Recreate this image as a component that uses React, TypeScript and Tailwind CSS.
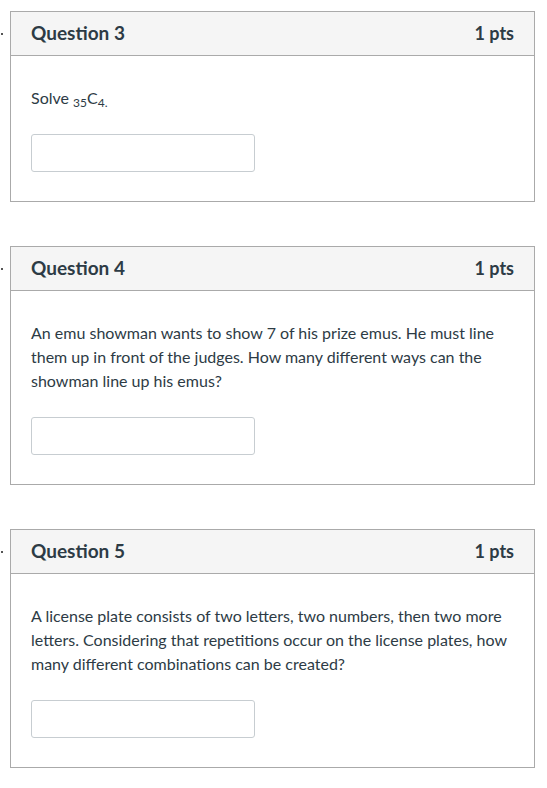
import React from 'react'

type Q = { title: string; pts: string; body: React.ReactNode }

const questions: Q[] = [
  {
    title: 'Question 3',
    pts: '1 pts',
    body: (
      <p>
        Solve <sub className="text-[12px]">35</sub>C<sub className="text-[12px]">4.</sub>
      </p>
    ),
  },
  {
    title: 'Question 4',
    pts: '1 pts',
    body: (
      <p>
        An emu showman wants to show 7 of his prize emus. He must line them up in front of the judges. How many
        different ways can the showman line up his emus?
      </p>
    ),
  },
  {
    title: 'Question 5',
    pts: '1 pts',
    body: (
      <p>
        A license plate consists of two letters, two numbers, then two more letters. Considering that repetitions
        occur on the license plates, how many different combinations can be created?
      </p>
    ),
  },
]

function QuestionCard({ q }: { q: Q }) {
  return (
    <div className="relative w-[525px] border border-[#aaaaaa] bg-white">
      {/* cut-off marker on the left edge */}
      <span className="absolute left-[-10px] top-[21px] h-[2px] w-[2px] bg-[#555]" />

      {/* Header */}
      <div className="flex h-11 items-center justify-between border-b border-[#aaaaaa] bg-[#f5f5f5] px-5">
        <span className="text-[19px] font-bold">{q.title}</span>
        <span className="text-[18px] font-bold">{q.pts}</span>
      </div>

      {/* Body */}
      <div className="px-5 pt-[30px] pb-[29px]">
        <div className="text-[16px] leading-6">{q.body}</div>
        <input
          type="text"
          className="mt-6 block h-[38px] w-[224px] rounded-[3px] border border-[#c7cdd1] bg-white outline-none"
        />
      </div>
    </div>
  )
}

export default function App() {
  return (
    <div
      className="min-h-[788px] bg-white pt-[11px] pl-[10px] text-[#2d3b45]"
      style={{ fontFamily: 'Lato, "Noto Sans", sans-serif' }}
    >
      <div className="flex flex-col gap-[44px]">
        {questions.map((q) => (
          <QuestionCard key={q.title} q={q} />
        ))}
      </div>
    </div>
  )
}
